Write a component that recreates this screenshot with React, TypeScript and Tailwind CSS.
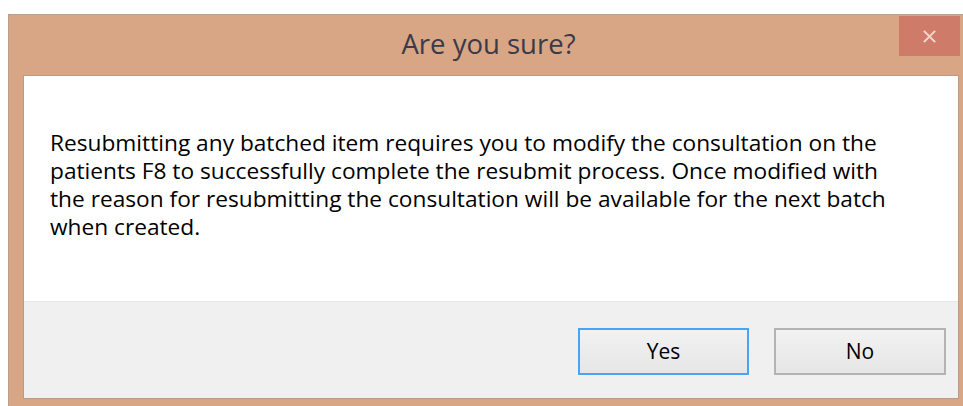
import React from 'react'

// Confirmation dialog shown before resubmitting a batched item
const App = () => {
  return (
    <div className="h-[406px] w-full overflow-hidden bg-white pl-[8px] pt-[14px] font-['Open_Sans',sans-serif]">
      <div className="flex h-[400px] w-[962px] flex-col border-l border-t border-[#b9a08e] bg-[#d8a684]">
        {/* title bar */}
        <div className="relative flex h-[60px] shrink-0 items-center justify-center pr-[2px]">
          <span className="pb-[2px] text-[27.5px] leading-none text-[#3b3a48]">Are you sure?</span>
          <button className="absolute right-[10px] top-[1px] flex h-[40px] w-[61px] items-center justify-center bg-[#cf7b69] text-[#f3d6cc]">
            <svg viewBox="0 0 16 16" className="h-[15px] w-[15px]" fill="none" stroke="currentColor" strokeWidth="2.2">
              <path d="M2 2 L14 14 M14 2 L2 14" />
            </svg>
          </button>
        </div>

        {/* client area */}
        <div className="ml-[14px] mr-[11px] flex h-[324px] flex-col border border-[#c09a80] bg-white">
          <div className="h-[225px] pl-[26px] pt-[53px] text-[22.7px] leading-[28px] text-black">
            <p>
              Resubmitting any batched item requires you to modify the consultation on the
              <br />
              patients F8 to successfully complete the resubmit process. Once modified with
              <br />
              the reason for resubmitting the consultation will be available for the next batch
              <br />
              when created.
            </p>
          </div>
          <div className="flex flex-1 items-start justify-end gap-[25px] border-t border-[#e8e8e8] bg-[#f0f0f0] pr-[12px] pt-[26px]">
            <button className="h-[47px] w-[171px] border-2 border-[#4aa3f7] bg-gradient-to-b from-[#f2f2f2] to-[#e6e6e6] text-[21px] text-black">
              Yes
            </button>
            <button className="h-[47px] w-[172px] border-2 border-[#b3b3b3] bg-gradient-to-b from-[#f2f2f2] to-[#e6e6e6] text-[21px] text-black">
              No
            </button>
          </div>
        </div>
      </div>
    </div>
  )
}

export default App
